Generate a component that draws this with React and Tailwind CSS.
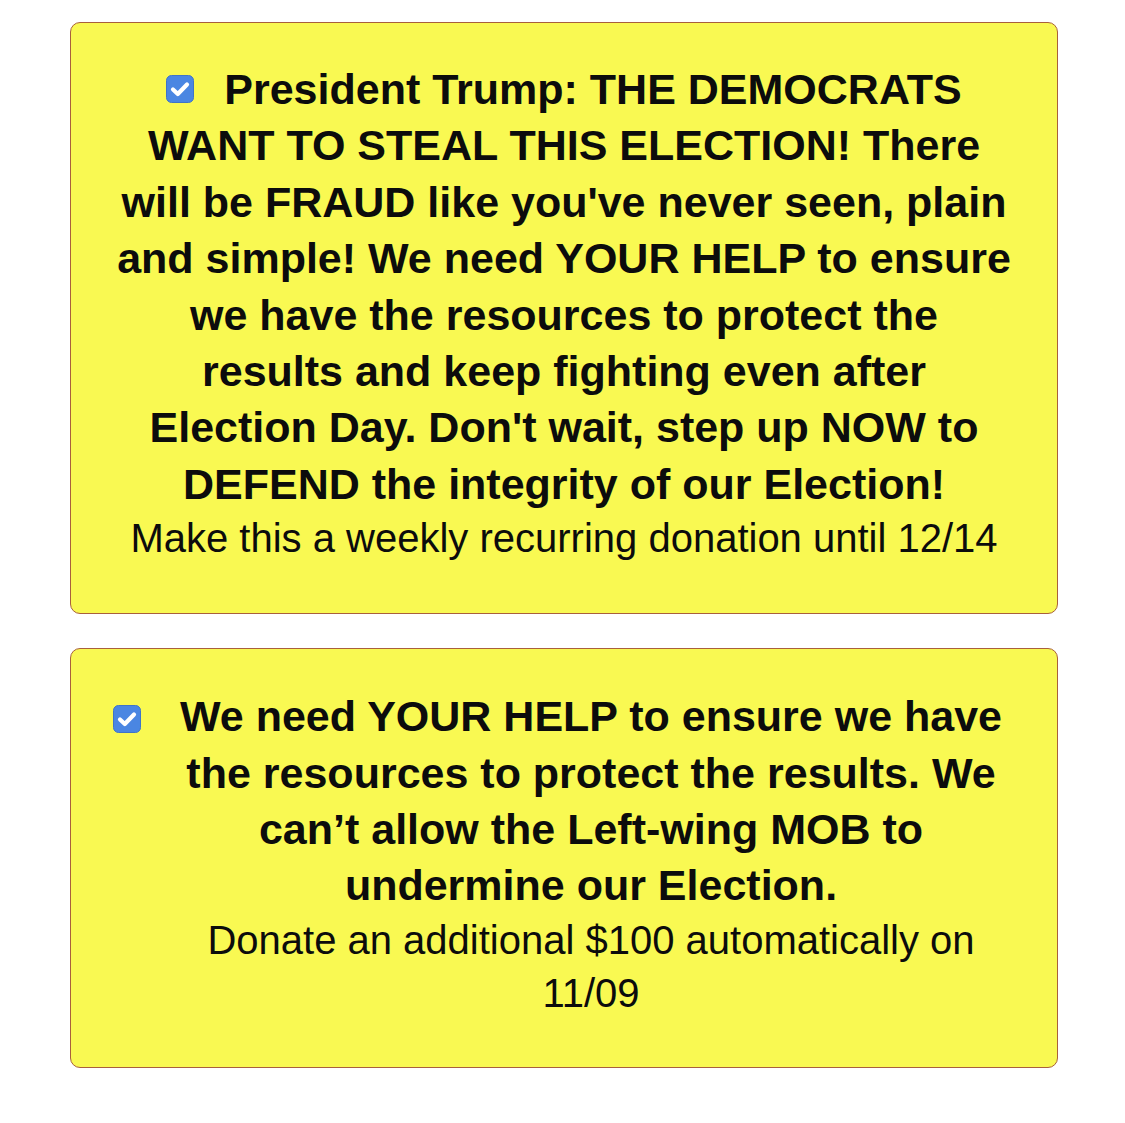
import React from "react";

function CheckIcon() {
  return (
    <svg width="28" height="28" viewBox="0 0 28 28" className="shrink-0">
      <rect x="0.5" y="0.5" width="27" height="27" rx="5" fill="#4a86e2" stroke="#3f74c8" />
      <path d="M7 14.5 L11.8 19 L21 9.5" fill="none" stroke="#fff" strokeWidth="4.2" strokeLinecap="round" strokeLinejoin="round" />
    </svg>
  );
}

const boldCls = "font-bold text-[43px] leading-[56.4px] whitespace-nowrap";
const regCls = "font-normal text-[40px] leading-[53px] whitespace-nowrap";

export default function App() {
  const firstLines = [
    "WANT TO STEAL THIS ELECTION! There",
    "will be FRAUD like you've never seen, plain",
    "and simple! We need YOUR HELP to ensure",
    "we have the resources to protect the",
    "results and keep fighting even after",
    "Election Day. Don't wait, step up NOW to",
    "DEFEND the integrity of our Election!",
  ];
  const secondLines = [
    "We need YOUR HELP to ensure we have",
    "the resources to protect the results. We",
    "can’t allow the Left-wing MOB to",
    "undermine our Election.",
  ];

  return (
    <div className="min-h-screen bg-white pt-[22px] text-[#0c0c0c]" style={{ fontFamily: '"Liberation Sans", Arial, Helvetica, sans-serif' }}>
      {/* box 1 */}
      <div className="ml-[70px] w-[988px] rounded-[10px] border-[1.5px] border-[#a9603c] bg-[#f9f952] pt-[38px] pb-[48px] flex flex-col items-center text-center">
        <div className={`${boldCls} flex items-center`}>
          <span className="mr-[30px] flex"><CheckIcon /></span>
          <span>President Trump: THE DEMOCRATS</span>
        </div>
        {firstLines.map((l) => (
          <div key={l} className={boldCls}>{l}</div>
        ))}
        <div className={regCls}>Make this a weekly recurring donation until 12/14</div>
      </div>

      {/* box 2 */}
      <div className="ml-[70px] mt-[34px] w-[988px] rounded-[10px] border-[1.5px] border-[#a9603c] bg-[#f9f952] pt-[39px] pb-[47px] pl-[42px] flex items-start">
        <div className="mt-[17px]"><CheckIcon /></div>
        <div className="w-[900px] flex flex-col items-center text-center">
          {secondLines.map((l) => (
            <div key={l} className={boldCls}>{l}</div>
          ))}
          <div className={regCls}>Donate an additional $100 automatically on</div>
          <div className={regCls}>11/09</div>
        </div>
      </div>
    </div>
  );
}
